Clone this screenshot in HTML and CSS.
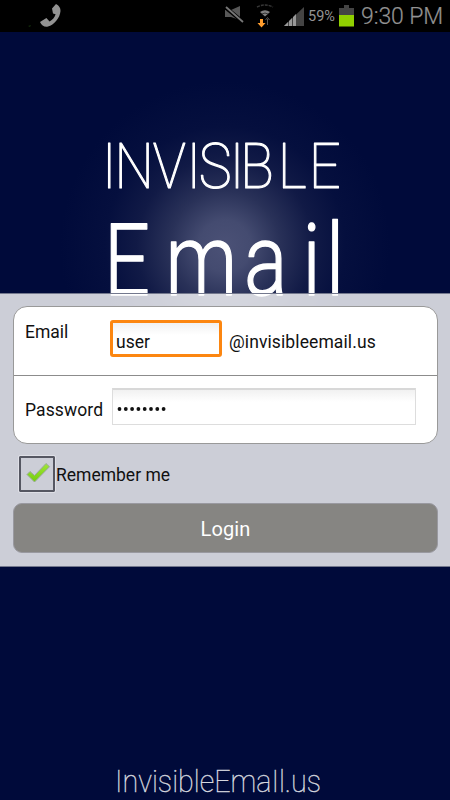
FILE: index.html
```
<!DOCTYPE html>
<html lang="en">
<head>
<meta charset="utf-8">
<title>Invisible Email</title>
<link rel="stylesheet" href="styles.css">
</head>
<body>
<header class="status">
  <svg class="status-call" width="40" height="32" viewBox="0 0 40 32"><path d="M2 26l3-1-1 2z" fill="#14310d"/><path d="M30 4l-4 4.500 1 5 2.600.8c-1 3.200-3 5.500-6 7.200l-3.200-3.500-6.400 4c1.500 3.300 4.400 5.400 8 4.600C28 25 34 18 34.500 11c.2-3-1.500-5.500-4.500-7z" fill="#929292"/></svg>
  <div class="status-right">
    <svg class="status-icons" width="80" height="32" viewBox="0 0 80 32">
      <path d="M1 10h6l9-4v14l-9-3H1z" fill="#585858"/>
      <path d="M1 7l18 15" stroke="#000" stroke-width="4"/><path d="M2 7l17 15" stroke="#777" stroke-width="1.800"/>
      <path d="M33 7q8-4 16 0" fill="none" stroke="#373737" stroke-width="1.400" stroke-dasharray="3 1"/>
      <path d="M36 12q5-3.500 10 0l-5 4.500z" fill="#808080"/><path d="M38 14q3-2 6 0" fill="none" stroke="#333"/>
      <path d="M36 19h3v4h2.500l-4 4.500-4-4.500H36z" fill="#ff9d2e"/><path d="M43.500 25v-6M41.500 20l2-2.500 2 2.500" fill="none" stroke="#555"/>
      <path d="M60 26L80 7v19z" fill="#444"/><path d="M60 26l4-4v4zM65 26v-5l3-3v8zM69 26v-9l3-3v12z" fill="#999"/>
    </svg>
    <span class="percent">59%</span>
    <svg class="battery" width="17" height="32" viewBox="0 0 17 32"><path d="M1 8h5V5h5v3h5v7H1z" fill="#444"/><path d="M1 15h15v11.500H1z" fill="#90d000"/></svg>
    <span class="time">9:30 PM</span>
  </div>
</header>
<main class="screen">
  <svg class="brand" width="450" height="268" viewBox="0 32 450 268" role="img">
    <text class="brand-top" transform="scale(.88 1)" x="116 130 173.500 212 226 261 273 316 351" y="188">INVISIBLE</text>
    <text class="brand-main" transform="scale(.8 1)" x="130 207 305 378 407.500" y="295">Email</text>
  </svg>
  <section class="panel">
    <div class="card">
      <div class="row email-row">
        <label class="label">Email</label>
        <div class="field focused">user</div>
        <span class="domain">@invisibleemail.us</span>
      </div>
      <div class="row password-row">
        <label class="label">Password</label>
        <div class="field password"><svg width="50" height="6" viewBox="0 0 50 6" fill="#111"><circle cx="2.500" cy="3" r="1.900"/><circle cx="8.800" cy="3" r="1.900"/><circle cx="15.100" cy="3" r="1.900"/><circle cx="21.400" cy="3" r="1.900"/><circle cx="27.700" cy="3" r="1.900"/><circle cx="34" cy="3" r="1.900"/><circle cx="40.300" cy="3" r="1.900"/><circle cx="46.600" cy="3" r="1.900"/></svg></div>
      </div>
    </div>
    <div class="remember">
      <span class="check"><svg width="32" height="32" viewBox="0 0 32 32"><defs><linearGradient id="g" x2="0" y2="1"><stop stop-color="#a1e53b"/><stop offset="1" stop-color="#72cd0a"/></linearGradient></defs><path d="M6 16.500l3-3 4.500 4L25 5.500l3.500 3.200L13.500 24z" fill="url(#g)" stroke="#9aa79b" stroke-width="1" stroke-linejoin="round"/></svg></span>
      <span class="remember-text">Remember me</span>
    </div>
    <div class="login"><span>Login</span></div>
  </section>
  <footer class="footer"><svg width="450" height="40" viewBox="0 760 450 40"><text class="site" x="115" y="791.500" textLength="206" lengthAdjust="spacingAndGlyphs">InvisibleEmaIl.us</text></svg></footer>
</main>
</body>
</html>
```
FILE: styles.css
```
* { box-sizing: border-box; }
body { margin: 0; width: 450px; height: 800px; overflow: hidden; background: #000a3a; font-family: Roboto, "Liberation Sans", sans-serif; color: #111; }
svg { display: block; flex: none; }
.status { height: 32px; background: #000; display: flex; justify-content: space-between; padding: 0 7px 0 27px; color: #939393; }
.status-call { margin-left: -1px; }
.status-right { display: flex; align-items: center; }
.status-icons { margin-right: 4px; }
.percent { font-size: 14.500px; width: 30px; white-space: nowrap; }
.battery { margin-right: 6px; }
.time { font-size: 23px; font-weight: 300; width: 82px; white-space: nowrap; -webkit-text-stroke: .2px #939393; letter-spacing: -.1px; }
.screen { height: 768px; display: flex; flex-direction: column; background: radial-gradient(circle at 225px 214px, #4b5176 0, #444b70 26px, #293158 55px, #111a46 88px, #050f3e 120px, #000a3a 165px); }
.brand { margin-bottom: -7px; overflow: visible; }
.brand text { fill: #fff; stroke: #fff; stroke-linejoin: round; }
.brand-top { font-size: 63px; font-weight: 100; stroke-width: 1.200px; }
.brand-main { font-size: 101px; font-weight: 300; stroke-width: 1.400px; }
.panel { height: 274px; border-top: 1px solid #73788d; border-bottom: 1px solid #73788d; background: rgba(255,255,255,.8); padding: 12px 12px 0 13px; z-index: 1; }
.card { height: 138px; background: #fff; border: 1px solid #999; border-radius: 14px; }
.row { display: flex; padding-left: 11px; font-size: 17.500px; }
.email-row { height: 69px; border-bottom: 1px solid #8c8c8c; padding-top: 13px; }
.label { width: 85px; line-height: 24px; white-space: nowrap; }
.field { background: linear-gradient(#f1f1f1, #fff 12px); }
.focused { width: 112px; height: 37px; border: 3px solid #fc8610; border-radius: 3px; padding: 7px 0 0 3px; line-height: 24px; }
.domain { padding: 10px 0 0 7px; line-height: 24px; letter-spacing: .1px; }
.password-row { padding-top: 12px; }
.password-row .label { width: 87px; padding-top: 10px; letter-spacing: .1px; }
.password { width: 304px; height: 37px; border: 1px solid #ddd; border-top: 2px solid #d8d8d8; padding: 16px 0 0 4px; }
.remember { display: flex; align-items: center; height: 36px; margin: 12px 0 0 6px; }
.check { width: 36px; height: 36px; border: 2px solid #555762; outline: 1px solid #dfe0e7; border-radius: 1px; }
.remember-text { margin: 2px 0 0 1px; font-size: 17.500px; }
.login { height: 50px; margin-top: 11px; border-radius: 9px; background: #868582; border: 1px solid #9999a0; color: #fff; font-size: 20px; line-height: 50px; text-align: center; letter-spacing: .1px; }
.footer { margin-top: auto; }
.site { font-size: 31px; font-weight: 100; fill: #d5d7df; stroke: #d5d7df; stroke-width: .4px; }
```
